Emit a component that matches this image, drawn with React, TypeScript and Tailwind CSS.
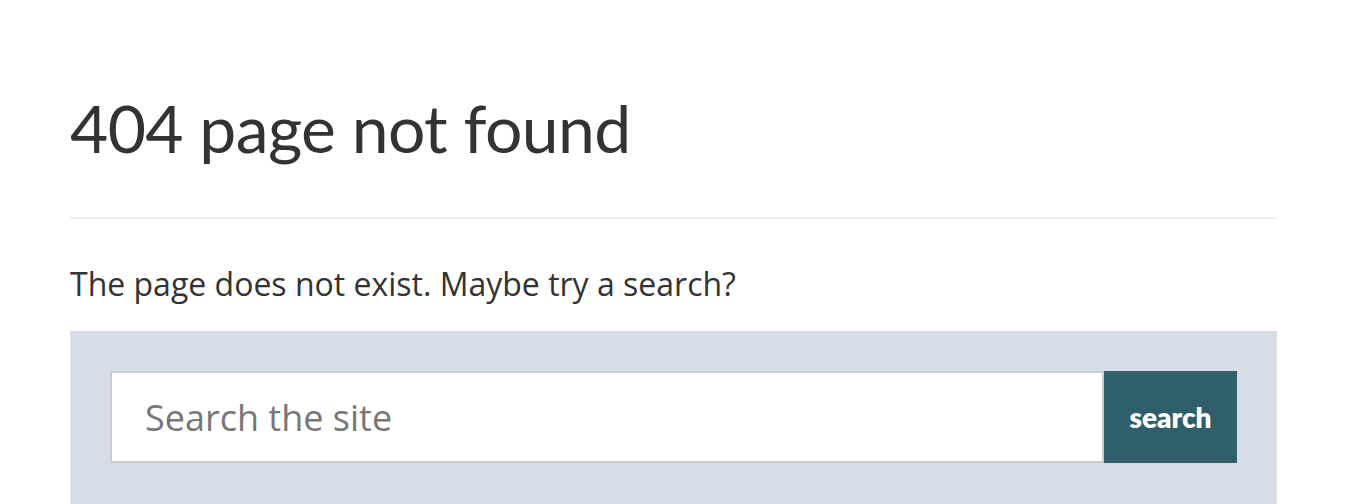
export default function App() {
  return (
    <div className="min-h-screen bg-white">
      <div className="ml-[70px] w-[1207px] pt-[88px]">
        <h1 className="font-['Lato',sans-serif] text-[66px] leading-[80px] text-[#333333] tracking-[-0.6px]">
          404 page not found
        </h1>
        <hr className="mt-[49px] border-0 border-t-2 border-[#eeeeee]" />
        <p className="mt-[43px] font-['Open_Sans',sans-serif] text-[32px] leading-[44px] text-[#333333]">
          The page does not exist. Maybe try a search?
        </p>
        <form className="mt-[25px] bg-[#d6dde7] px-10 pt-10 pb-12 flex">
          <input
            type="text"
            placeholder="Search the site"
            className="flex-1 h-[92px] border-2 border-[#cccccc] bg-white px-[33px] font-['Open_Sans',sans-serif] text-[36px] text-[#333] placeholder:text-[#777777] outline-none"
          />
          <button
            type="button"
            className="w-[133px] h-[92px] bg-[#2f5f6a] text-white font-['Lato',sans-serif] font-extrabold text-[28px]"
          >
            search
          </button>
        </form>
      </div>
    </div>
  );
}
